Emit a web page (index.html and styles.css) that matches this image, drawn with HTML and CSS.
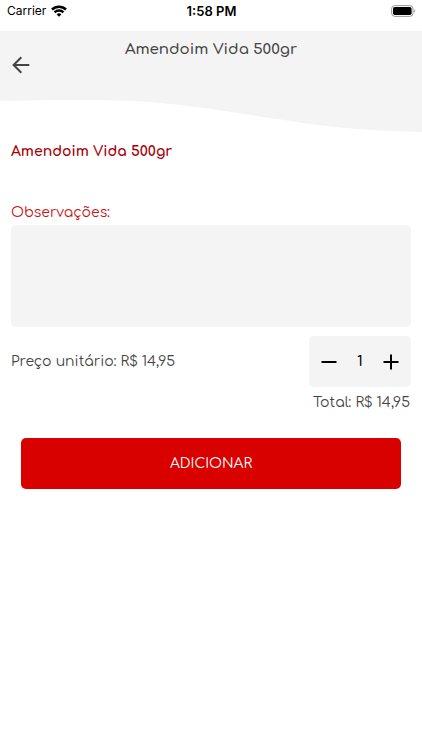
FILE: index.html
```html
<!DOCTYPE html>
<html lang="pt-BR">
<head>
<meta charset="utf-8">
<meta name="viewport" content="width=device-width, initial-scale=1">
<title>Amendoim Vida 500gr</title>
<link rel="stylesheet" href="styles.css">
</head>
<body>
<div class="status">
  <div class="carrier">
    <span>Carrier</span>
    <svg width="16" height="12" viewBox="0 0 16 12" aria-hidden="true">
      <g fill="none" stroke="#000" stroke-width="2.5">
        <path d="M1 4.5a10 10 0 0 1 14 0"/>
        <path d="M3.6 7.4a6.3 6.3 0 0 1 8.8 0"/>
      </g>
      <path d="M5.6 9.4a3.5 3.5 0 0 1 4.8 0L8 11.8z"/>
    </svg>
  </div>
  <time class="clock">1:58 PM</time>
  <svg class="battery" width="25" height="12" viewBox="0 0 25 12" aria-hidden="true">
    <rect x=".6" y=".6" width="21.4" height="10.8" rx="3.2" fill="#fff" stroke="#999"/>
    <rect x="2" y="2" width="18.6" height="8" rx="1.8"/>
    <path d="M23.2 4.2c1.4.6 1.4 3 0 3.6z" fill="#999"/>
  </svg>
</div>
<header class="header">
  <h1 class="title">Amendoim Vida 500gr</h1>
  <button class="back" type="button" aria-label="Voltar">
    <svg width="18" height="18" viewBox="0 0 18 18" fill="none" stroke="#444" stroke-width="2" aria-hidden="true">
      <path d="M17.3 9H2M9.3 1.3 1.6 9l7.7 7.7"/>
    </svg>
  </button>
  <svg class="wave" viewBox="0 0 422 34" preserveAspectRatio="none" aria-hidden="true">
    <path fill="#f4f4f4" d="M0 0H422V34C381 33 350 31 310 26C242 16 200 8 150 4C105 1 45 2 0 3Z"/>
  </svg>
</header>
<main class="content">
  <h2 class="name">Amendoim Vida 500gr</h2>
  <label class="notes-label" for="notes">Observações:</label>
  <textarea class="notes" id="notes"></textarea>
  <div class="order">
    <p class="price">Preço unitário: R$ 14,95</p>
    <div class="stepper">
      <button class="step" type="button" aria-label="Diminuir">
        <svg width="16" height="16" viewBox="0 0 16 16" stroke="#000" stroke-width="2" aria-hidden="true"><path d="M.5 8h15"/></svg>
      </button>
      <output class="quantity">1</output>
      <button class="step" type="button" aria-label="Aumentar">
        <svg width="16" height="16" viewBox="0 0 16 16" stroke="#000" stroke-width="2" aria-hidden="true"><path d="M.5 8h15M8 .5v15"/></svg>
      </button>
    </div>
  </div>
  <p class="total">Total: R$ 14,95</p>
  <button class="add" type="button">ADICIONAR</button>
</main>
</body>
</html>
```
FILE: styles.css
```css
* { box-sizing: border-box; }

body {
  margin: 0;
  background: #fff;
  color: #444;
  font: 14px/20px Comfortaa, Quicksand, Lato, sans-serif;
}

h1, h2, p { margin: 0; }

button {
  border: 0;
  padding: 0;
  background: none;
  font: inherit;
  cursor: pointer;
}

svg { display: block; }

.status {
  display: grid;
  grid-template-columns: 1fr auto 1fr;
  align-items: center;
  height: 31px;
  padding: 0 6px 9px 7px;
  color: #000;
  font: 12px/20px Inter, sans-serif;
}

.carrier {
  display: flex;
  align-items: center;
  gap: 5px;
}

.clock {
  font-size: 13px;
  font-weight: 600;
}

.battery { justify-self: end; }

.header {
  display: flex;
  flex-direction: column;
  padding-top: 9px;
  background: linear-gradient(#f4f4f4, #f4f4f4) top / 100% 68px no-repeat;
}

.title {
  font-size: 15px;
  font-weight: 600;
  line-height: 20px;
  text-align: center;
}

.back {
  align-self: flex-start;
  height: 18px;
  margin: -4px 0 24px 12px;
}

.wave {
  width: 100%;
  height: 34px;
}

.content {
  display: flex;
  flex-direction: column;
  padding: 10px 11px;
}

.name {
  color: #a80008;
  font-size: 14px;
  font-weight: 700;
  line-height: 20px;
}

.notes-label {
  margin: 41px 0 2px;
  color: #c81414;
}

.notes {
  width: 100%;
  height: 102px;
  padding: 10px;
  border: 0;
  border-radius: 5px;
  background: #f4f4f4;
  color: inherit;
  font: inherit;
  resize: none;
}

.order {
  display: flex;
  align-items: center;
  justify-content: space-between;
  margin-top: 9px;
}

.stepper {
  display: flex;
  align-items: center;
  justify-content: space-between;
  width: 102px;
  height: 51px;
  padding: 0 12px;
  border-radius: 5px;
  background: #f4f4f4;
}

.quantity {
  color: #000;
  font-weight: 600;
}

.total {
  margin: 6px 1px 0;
  text-align: right;
}

.add {
  height: 51px;
  margin: 25px 10px 0;
  border-radius: 5px;
  background: #d90000;
  color: #fff;
}
```
